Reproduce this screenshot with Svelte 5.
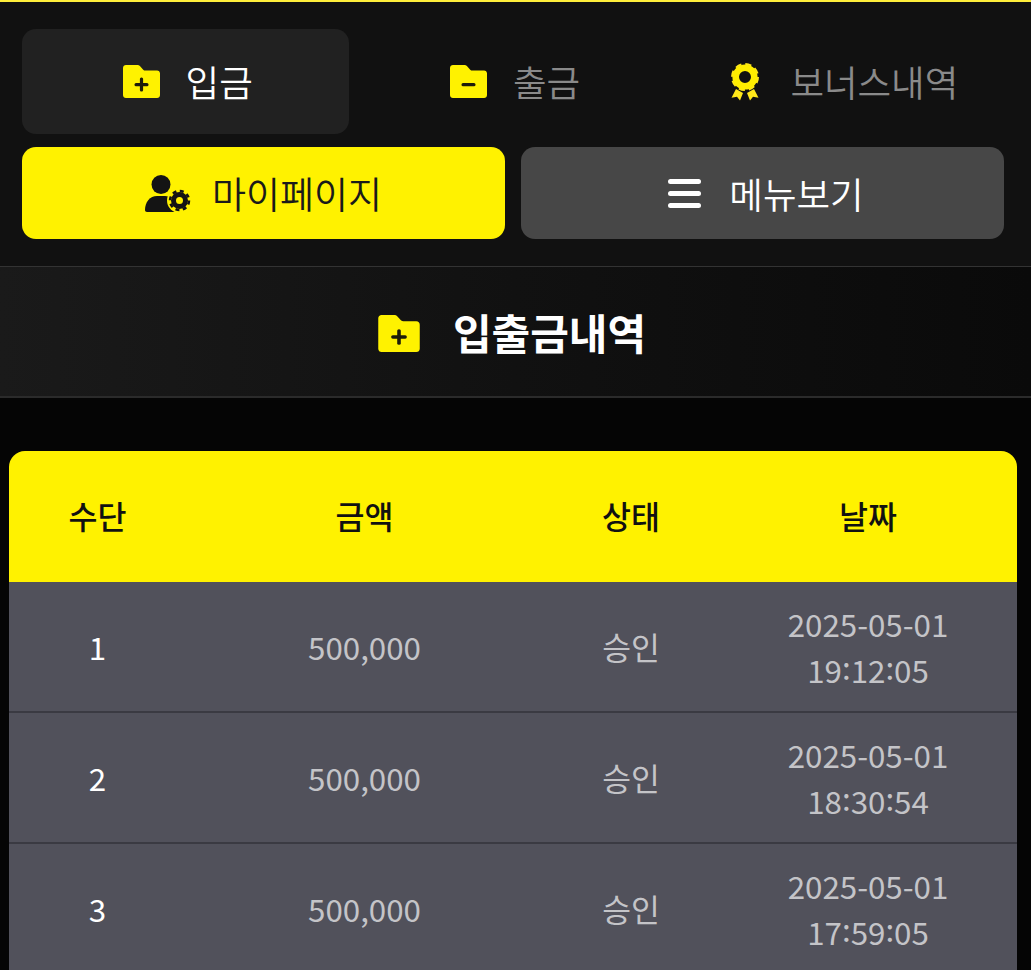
<script>
	const tabs = [
		{ label: '입금', icon: 'plus', active: true },
		{ label: '출금', icon: 'minus', active: false },
		{ label: '보너스내역', icon: 'award', active: false }
	];

	const rows = [
		{ no: 1, amount: '500,000', status: '승인', date: '2025-05-01', time: '19:12:05' },
		{ no: 2, amount: '500,000', status: '승인', date: '2025-05-01', time: '18:30:54' },
		{ no: 3, amount: '500,000', status: '승인', date: '2025-05-01', time: '17:59:05' }
	];
</script>

{#snippet folder(type, cls)}
	<svg class={cls} viewBox="0 0 37 33" aria-hidden="true">
		<path class="folder" d="M3 0h11.5c1 0 1.8.4 2.4 1.1l3.3 3.6c.6.6 1.3.9 2.2.9H34c1.7 0 3 1.300 3 3V30c0 1.700-1.300 3-3 3H3c-1.700 0-3-1.300-3-3V3c0-1.700 1.300-3 3-3z" />
		<rect class="mark" x="11.500" y="18" width="14" height="3.200" rx="1.500" />
		{#if type === 'plus'}
			<rect class="mark" x="16.900" y="12.600" width="3.200" height="14" rx="1.500" />
		{/if}
	</svg>
{/snippet}

<div class="page">
	<header class="top">
		<nav class="tabs">
			{#each tabs as tab}
				<a class="tab" class:active={tab.active} href="#top">
					{#if tab.icon === 'award'}
						<svg class="award" viewBox="0 0 30 38" aria-hidden="true">
							<circle class="ring-teeth" cx="15" cy="14" r="13" />
							<circle class="ring" cx="15" cy="14" r="9.300" />
							<path class="ribbon" d="M6 26l7 4-3 7.500-3-3.800-5.500 1zM24 26l-7 4 3 7.500 3-3.800 5.500 1z" />
						</svg>
					{:else}
						{@render folder(tab.icon, 'tab-icon')}
					{/if}
					<span>{tab.label}</span>
				</a>
			{/each}
		</nav>

		<div class="actions">
			<a class="action mypage" href="#top">
				<svg class="user-gear" viewBox="0 0 46 37" aria-hidden="true">
					<circle cx="16" cy="9.500" r="9.500" />
					<path d="M0 35c0-8 5-14 12-14h8c5 0 9 3 11 7v9H2c-1.200 0-2-.800-2-2z" />
					<circle class="gear-halo" cx="34.500" cy="25.500" r="12.500" />
					<circle class="gear-teeth" cx="34.500" cy="25.500" r="9.500" />
					<circle class="gear-ring" cx="34.500" cy="25.500" r="6" />
				</svg>
				<span>마이페이지</span>
			</a>
			<a class="action menu" href="#top">
				<svg class="bars" viewBox="0 0 33 29" aria-hidden="true">
					<rect y="0" width="33" height="5" rx="2.500" />
					<rect y="12" width="33" height="5" rx="2.500" />
					<rect y="24" width="33" height="5" rx="2.500" />
				</svg>
				<span>메뉴보기</span>
			</a>
		</div>
	</header>

	<section class="title">
		{@render folder('plus', 'title-icon')}
		<h1>입출금내역</h1>
	</section>

	<main class="content">
		<table>
			<colgroup>
				<col class="c1" />
				<col class="c2" />
				<col class="c3" />
				<col class="c4" />
			</colgroup>
			<thead>
				<tr>
					<th>수단</th>
					<th>금액</th>
					<th>상태</th>
					<th>날짜</th>
				</tr>
			</thead>
			<tbody>
				{#each rows as row}
					<tr>
						<td class="no">{row.no}</td>
						<td>{row.amount}</td>
						<td>{row.status}</td>
						<td>
							{row.date}<br />
							{#each row.time.split(':') as part, i}{#if i > 0}<span class="colon">:</span>{/if}{part}{/each}
						</td>
					</tr>
				{/each}
			</tbody>
		</table>
	</main>
</div>

<style>
	:global(body) {
		margin: 0;
		background: #050505;
	}

	.page {
		height: 970px;
		overflow: hidden;
		background: #050505;
		font-family: "Noto Sans CJK KR", "Noto Sans", sans-serif;
	}

	a {
		text-decoration: none;
	}

	.top {
		box-sizing: border-box;
		height: 267px;
		padding: 27px 27px 0 22px;
		background: #111;
		border-top: 2px solid #ffee3b;
		border-bottom: 1px solid #333;
	}

	.tabs {
		display: grid;
		grid-template-columns: repeat(3, 1fr);
	}

	.tab {
		box-sizing: border-box;
		height: 105px;
		padding-left: 4px;
		display: flex;
		align-items: center;
		justify-content: center;
		gap: 26px;
		border-radius: 14px;
		color: #8a8a8a;
		font-size: 36.500px;
		font-weight: 350;
	}

	.tab:last-child {
		padding-left: 8px;
	}

	.tab.active {
		background: #212121;
		color: #fff;
	}

	.tab-icon {
		width: 37px;
		height: 33px;
	}

	.folder {
		fill: #fff200;
	}

	.mark {
		fill: #1d1c0a;
	}

	.award {
		width: 30px;
		height: 38px;
		margin-right: 4px;
	}

	.ring-teeth {
		fill: none;
		stroke: #ffe81a;
		stroke-width: 2;
		stroke-dasharray: 6.200 4;
	}

	.ring {
		fill: none;
		stroke: #ffee00;
		stroke-width: 6.600;
	}

	.ribbon {
		fill: #ffe81a;
	}

	.actions {
		display: grid;
		grid-template-columns: 1fr 1fr;
		gap: 16px;
		margin-top: 13px;
	}

	.action {
		box-sizing: border-box;
		height: 92px;
		display: flex;
		align-items: center;
		justify-content: center;
		gap: 21px;
		border-radius: 14px;
		font-size: 37px;
		font-weight: 350;
	}

	.mypage {
		background: #fff200;
		color: #1a1a1a;
	}

	.menu {
		padding-left: 7px;
		background: #474747;
		color: #fff;
		font-size: 36.500px;
		gap: 28px;
	}

	.user-gear {
		width: 46px;
		height: 37px;
		fill: #141414;
	}

	.gear-halo {
		fill: #fff200;
	}

	.gear-teeth {
		fill: none;
		stroke: #141414;
		stroke-width: 2.500;
		stroke-dasharray: 4 3.460;
	}

	.gear-ring {
		fill: none;
		stroke: #141414;
		stroke-width: 5;
	}

	.bars {
		width: 33px;
		height: 29px;
		fill: #fff;
	}

	.title {
		box-sizing: border-box;
		height: 131px;
		padding-right: 7px;
		display: flex;
		align-items: center;
		justify-content: center;
		gap: 33px;
		background: linear-gradient(90deg, #1a1a1a, #111 50%, #0a0a0a);
		border-bottom: 2px solid #2b2b2b;
	}

	.title-icon {
		width: 42px;
		height: 37px;
		margin-top: 4px;
	}

	h1 {
		margin: 0;
		color: #fff;
		font-size: 42px;
		font-weight: 700;
	}

	.content {
		padding: 53px 14px 0 9px;
	}

	table {
		width: 1008px;
		table-layout: fixed;
		border-collapse: separate;
		border-spacing: 0;
		text-align: center;
	}

	.c1 {
		width: 177px;
	}

	.c2 {
		width: 357px;
	}

	.c3 {
		width: 176px;
	}

	th {
		box-sizing: border-box;
		height: 131px;
		padding: 0 0 3px;
		background: #fff200;
		color: #111;
		font-size: 31.500px;
		font-weight: 500;
	}

	th:first-child {
		border-top-left-radius: 16px;
	}

	th:last-child {
		border-top-right-radius: 16px;
	}

	td {
		box-sizing: border-box;
		height: 131px;
		padding: 0;
		background: #51515b;
		border-bottom: 2px solid #3a3a42;
		color: #c4c4c8;
		font-size: 31.300px;
		line-height: 46px;
	}

	.no {
		color: #fff;
	}

	.colon {
		display: inline-block;
		transform: translateY(-3px);
	}
</style>
